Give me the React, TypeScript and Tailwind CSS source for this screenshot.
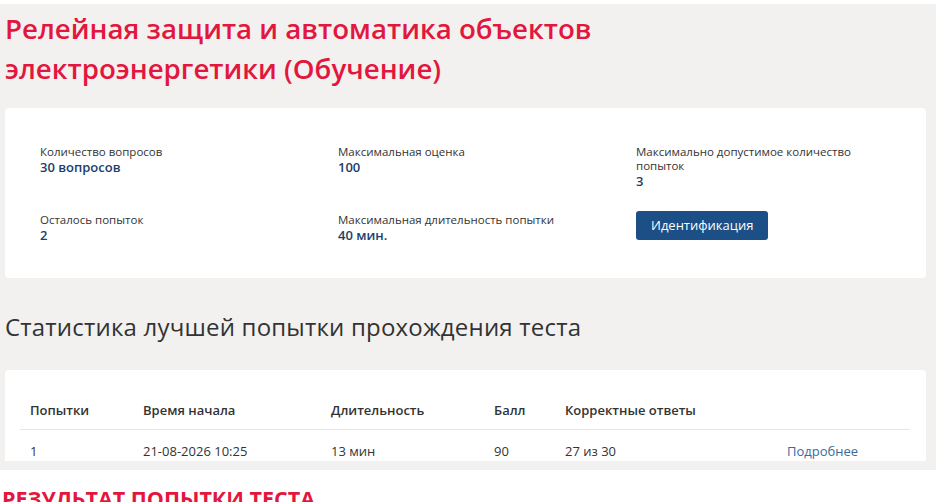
import React from 'react';

// сведения о тесте
const info = [
  { label: 'Количество вопросов', value: '30 вопросов' },
  { label: 'Максимальная оценка', value: '100' },
  { label: 'Максимально допустимое количество попыток', value: '3' },
  { label: 'Осталось попыток', value: '2' },
  { label: 'Максимальная длительность попытки', value: '40 мин.' },
];

const attempts = [
  { n: '1', start: '21-08-2026 10:25', duration: '13 мин', score: '90', correct: '27 из 30' },
];

export default function App() {
  return (
    <div className="h-[502px] w-[939px] overflow-hidden bg-white pt-[4px] font-['Open_Sans',sans-serif] text-[#333]">
      <div className="mr-[3px] h-[466px] overflow-hidden bg-[#f2f1ef] pl-[5px] pr-[10px]">
        <h1 className="pt-[4px] text-[27.7px] font-semibold leading-[40px] text-[#e3173e]">
          Релейная защита и автоматика объектов
          <br />
          электроэнергетики (Обучение)
        </h1>

        {/* карточка со сведениями */}
        <div className="mt-[20px] h-[170px] rounded-[4px] bg-white pl-[35px] pt-[37px]">
          <div className="grid grid-cols-[298px_298px_240px] gap-y-[20px]">
            {info.map((item) => (
              <div key={item.label} className="h-[48px]">
                <div className="text-[11.5px] leading-[14px] text-[#333]">{item.label}</div>
                <div className="text-[13px] font-semibold leading-[17px] text-[#1b3e6b]">{item.value}</div>
              </div>
            ))}
            <div className="-mt-[2px]">
              <button className="h-[29px] rounded-[3px] bg-[#1b4f86] px-[15px] text-[13px] leading-[29px] text-white">
                Идентификация
              </button>
            </div>
          </div>
        </div>

        <h2 className="mt-[33px] text-[24px] font-normal leading-[32px] tracking-[0.2px] text-[#333]">
          Статистика лучшей попытки прохождения теста
        </h2>

        {/* таблица попыток */}
        <div className="mt-[27px] rounded-t-[4px] bg-white px-[15px] pt-[31px]">
          <table className="w-[890px] text-left text-[13px]">
            <thead>
              <tr className="border-b border-[#e6e6e6]">
                <th className="w-[123px] pb-[8px] pl-[10px] font-semibold">Попытки</th>
                <th className="w-[188px] pb-[8px] font-semibold">Время начала</th>
                <th className="w-[163px] pb-[8px] font-semibold">Длительность</th>
                <th className="w-[71px] pb-[8px] font-semibold">Балл</th>
                <th className="w-[222px] pb-[8px] font-semibold">Корректные ответы</th>
                <th className="pb-[8px]"></th>
              </tr>
            </thead>
            <tbody>
              {attempts.map((a) => (
                <tr key={a.n}>
                  <td className="pl-[10px] pt-[12px]">{a.n}</td>
                  <td className="pt-[12px]">{a.start}</td>
                  <td className="pt-[12px]">{a.duration}</td>
                  <td className="pt-[12px]">{a.score}</td>
                  <td className="pt-[12px]">{a.correct}</td>
                  <td className="pt-[12px] text-[#3a6b9c]">Подробнее</td>
                </tr>
              ))}
            </tbody>
          </table>
        </div>
      </div>

      <div className="pl-[2px] pt-[16px] text-[21.5px] font-bold leading-[26px] text-[#e3173e]">
        РЕЗУЛЬТАТ ПОПЫТКИ ТЕСТА
      </div>
    </div>
  );
}
